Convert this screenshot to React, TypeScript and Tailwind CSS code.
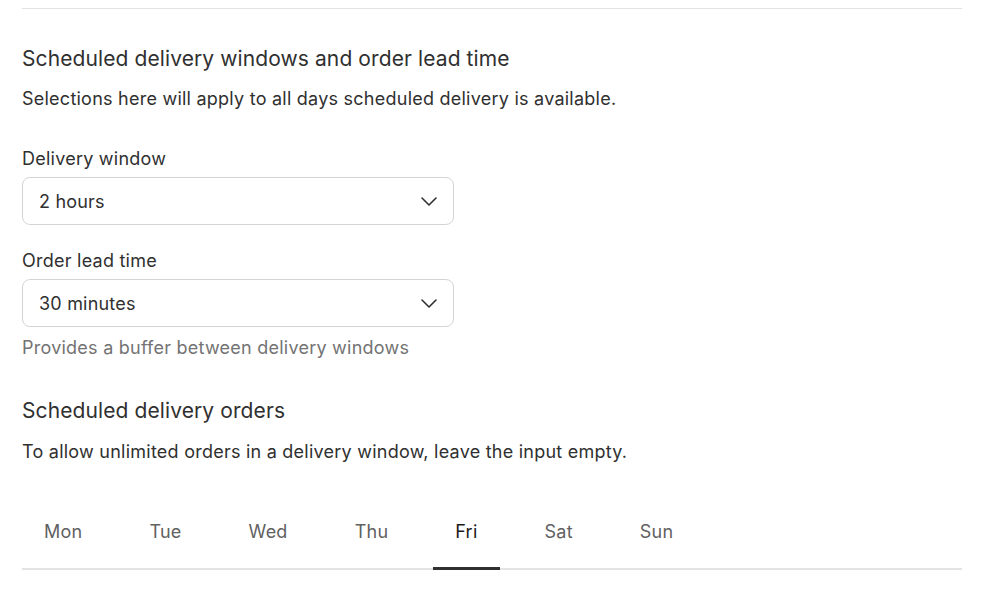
const days = ["Mon", "Tue", "Wed", "Thu", "Fri", "Sat", "Sun"];

function Chevron() {
  return (
    <svg width="16" height="9" viewBox="0 0 16 9" fill="none" className="text-[#303030]">
      <path d="M1 1l7 7 7-7" stroke="currentColor" strokeWidth="1.6" strokeLinecap="round" strokeLinejoin="round" />
    </svg>
  );
}

function Select({ value }: { value: string }) {
  return (
    <div className="w-[432px] h-[48px] rounded-lg border border-[#d4d4d4] bg-white flex items-center justify-between pl-4 pr-4">
      <span className="text-[18px] tracking-[0.2px] text-[#303030]">{value}</span>
      <Chevron />
    </div>
  );
}

export default function App() {
  return (
    <div className="bg-white w-[988px] h-[602px] pl-[22px] pr-[26px] pt-2 text-[#303030] font-['Inter',sans-serif] overflow-hidden">
      <div className="border-t border-[#e3e3e3]" />

      <h2 className="mt-[36px] text-[21px] tracking-[0.1px] leading-[28px]">Scheduled delivery windows and order lead time</h2>
      <p className="mt-[14px] text-[18px] tracking-[0.24px] leading-[24px]">Selections here will apply to all days scheduled delivery is available.</p>

      <div className="mt-[36px]">
        <label className="block text-[18px] tracking-[0.24px] leading-[24px]">Delivery window</label>
        <div className="mt-[6px]">
          <Select value="2 hours" />
        </div>
      </div>

      <div className="mt-[24px]">
        <label className="block text-[18px] tracking-[0.24px] leading-[24px]">Order lead time</label>
        <div className="mt-[6px]">
          <Select value="30 minutes" />
        </div>
        <p className="mt-[9px] text-[18px] tracking-[0.24px] leading-[24px] text-[#737373]">Provides a buffer between delivery windows</p>
      </div>

      <h2 className="mt-[37px] text-[21px] tracking-[0.1px] leading-[28px]">Scheduled delivery orders</h2>
      <p className="mt-[15px] text-[18px] tracking-[0.24px] leading-[24px]">To allow unlimited orders in a delivery window, leave the input empty.</p>

      <div className="mt-[52px] flex gap-[23px] border-b-2 border-[#e3e3e3]">
        {days.map((d) => (
          <div
            key={d}
            className={
              d === "Fri"
                ? "px-[22px] pt-[4px] pb-[23px] text-[18px] tracking-[0.24px] leading-[24px] text-[#1a1a1a] border-b-[3px] border-[#303030] -mb-[2px]"
                : "px-[22px] pt-[4px] pb-[23px] text-[18px] tracking-[0.24px] leading-[24px] text-[#616161] border-b-[3px] border-transparent -mb-[2px]"
            }
          >
            {d}
          </div>
        ))}
      </div>
    </div>
  );
}
